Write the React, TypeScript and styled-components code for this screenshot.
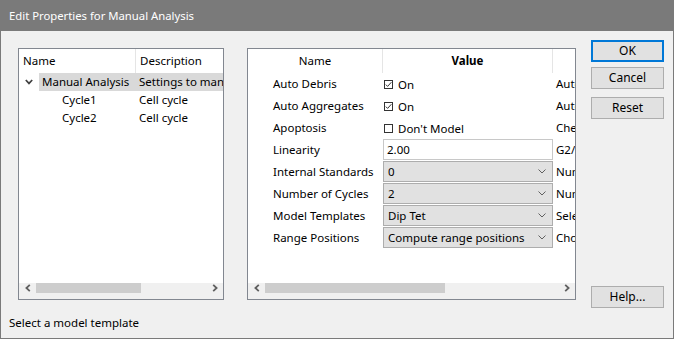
import styled, { createGlobalStyle } from 'styled-components';

const GlobalStyle = createGlobalStyle`
  html, body {
    margin: 0;
    padding: 0;
    background: #f0f0f0;
  }
  * {
    box-sizing: border-box;
  }
`;

type TreeItem = { name: string; desc: string; level: number; expandable?: boolean; selected?: boolean };

const treeItems: TreeItem[] = [
  { name: 'Manual Analysis', desc: 'Settings to manage', level: 0, expandable: true, selected: true },
  { name: 'Cycle1', desc: 'Cell cycle', level: 1 },
  { name: 'Cycle2', desc: 'Cell cycle', level: 1 },
];

type Prop =
  | { name: string; kind: 'check'; checked: boolean; text: string; desc: string }
  | { name: string; kind: 'text'; text: string; desc: string }
  | { name: string; kind: 'combo'; text: string; desc: string };

const props: Prop[] = [
  { name: 'Auto Debris', kind: 'check', checked: true, text: 'On', desc: 'Auto debris' },
  { name: 'Auto Aggregates', kind: 'check', checked: true, text: 'On', desc: 'Auto aggregates' },
  { name: 'Apoptosis', kind: 'check', checked: false, text: "Don't Model", desc: 'Check to model' },
  { name: 'Linearity', kind: 'text', text: '2.00', desc: 'G2/G1 ratio' },
  { name: 'Internal Standards', kind: 'combo', text: '0', desc: 'Number of standards' },
  { name: 'Number of Cycles', kind: 'combo', text: '2', desc: 'Number of cycles' },
  { name: 'Model Templates', kind: 'combo', text: 'Dip Tet', desc: 'Select a template' },
  { name: 'Range Positions', kind: 'combo', text: 'Compute range positions', desc: 'Choose positions' },
];

const Chevron = ({ dir }: { dir: 'left' | 'right' }) => (
  <svg width="6" height="8" viewBox="0 0 6 8">
    <path
      d={dir === 'left' ? 'M4.8 0.8 L1.4 4 L4.8 7.2' : 'M1.2 0.8 L4.6 4 L1.2 7.2'}
      fill="none"
      stroke="#606060"
      strokeWidth="1.8"
    />
  </svg>
);

const ScrollBar = ({ thumbWidth }: { thumbWidth: number }) => (
  <ScrollTrack>
    <ScrollArrow>
      <Chevron dir="left" />
    </ScrollArrow>
    <ThumbArea>
      <Thumb style={{ width: thumbWidth }} />
    </ThumbArea>
    <ScrollArrow>
      <Chevron dir="right" />
    </ScrollArrow>
  </ScrollTrack>
);

const CheckBox = ({ checked }: { checked: boolean }) => (
  <Box>
    {checked && (
      <svg width="7" height="7" viewBox="0 0 7 7">
        <path d="M0.8 3.6 L2.6 5.4 L6.4 1.2" fill="none" stroke="#333" strokeWidth="1" />
      </svg>
    )}
  </Box>
);

const App = (): JSX.Element => {
  return (
    <>
      <GlobalStyle />
      <Window>
        <TitleBar>Edit Properties for Manual Analysis</TitleBar>
        <Body>
          <TreePanel>
            <HeaderRow $cols="117px 1fr">
              <HeaderCell $sep>Name</HeaderCell>
              <HeaderCell>Description</HeaderCell>
            </HeaderRow>
            {treeItems.map((item) => (
              <TreeRow key={item.name}>
                <Expander>
                  {item.expandable && (
                    <svg width="8" height="6" viewBox="0 0 8 6">
                      <path d="M0.8 1 L4 4.4 L7.2 1" fill="none" stroke="#404040" strokeWidth="1.7" />
                    </svg>
                  )}
                </Expander>
                <TreeItemBody $selected={item.selected}>
                  <TreeName $indent={item.level * 20}>{item.name}</TreeName>
                  <TreeDesc>{item.desc}</TreeDesc>
                </TreeItemBody>
              </TreeRow>
            ))}
            <Filler />
            <ScrollBar thumbWidth={105} />
          </TreePanel>

          <GridPanel>
            <HeaderRow $cols="135px 170px 1fr">
              <HeaderCell $sep $center>Name</HeaderCell>
              <HeaderCell $sep $center $bold>Value</HeaderCell>
              <HeaderCell />
            </HeaderRow>
            {props.map((p) => (
              <PropRow key={p.name}>
                <PropName>{p.name}</PropName>
                <PropValue>
                  {p.kind === 'check' && (
                    <CheckValue>
                      <CheckBox checked={p.checked} />
                      <span>{p.text}</span>
                    </CheckValue>
                  )}
                  {p.kind === 'text' && <TextBox>{p.text}</TextBox>}
                  {p.kind === 'combo' && (
                    <ComboBox>
                      <span>{p.text}</span>
                      <svg width="8" height="5" viewBox="0 0 8 5">
                        <path d="M0.5 0.5 L4 4 L7.5 0.5" fill="none" stroke="#606060" strokeWidth="1" />
                      </svg>
                    </ComboBox>
                  )}
                </PropValue>
                <PropDesc>{p.desc}</PropDesc>
              </PropRow>
            ))}
            <Filler />
            <ScrollBar thumbWidth={180} />
          </GridPanel>

          <ButtonColumn>
            <Button $primary>OK</Button>
            <Button>Cancel</Button>
            <Button $gap>Reset</Button>
            <Button $bottom>Help...</Button>
          </ButtonColumn>
        </Body>
        <StatusBar>Select a model template</StatusBar>
      </Window>
    </>
  );
};

export default App;

const Window = styled.div`
  width: 674px;
  height: 339px;
  display: flex;
  flex-direction: column;
  background: #f0f0f0;
  border: 1px solid #7a7a7a;
  border-top: none;
  font-family: 'Noto Sans', 'Liberation Sans', sans-serif;
  font-size: 11.5px;
  color: #000;
`;

const TitleBar = styled.div`
  height: 31px;
  margin: 0 -1px;
  padding: 0 9px;
  background: #7a7a7a;
  color: #fff;
  font-size: 11.3px;
  line-height: 31px;
  flex-shrink: 0;
`;

const Body = styled.div`
  display: flex;
  height: 277px;
  padding: 9px 9px 0 17px;
  flex-shrink: 0;
`;

const Panel = styled.div`
  margin-top: 8px;
  height: 252px;
  border: 1px solid #828790;
  background: #fff;
  display: flex;
  flex-direction: column;
  overflow: hidden;
`;

const TreePanel = styled(Panel)`
  width: 206px;
  margin-right: 23px;
`;

const GridPanel = styled(Panel)`
  width: 329px;
  margin-right: 15px;
`;

const HeaderRow = styled.div<{ $cols: string }>`
  display: grid;
  grid-template-columns: ${(p) => p.$cols};
  height: 24px;
  flex-shrink: 0;
`;

const HeaderCell = styled.div<{ $sep?: boolean; $center?: boolean; $bold?: boolean }>`
  padding-left: ${(p) => (p.$center ? '0' : '4px')};
  line-height: 24px;
  white-space: nowrap;
  overflow: hidden;
  text-align: ${(p) => (p.$center ? 'center' : 'left')};
  font-weight: ${(p) => (p.$bold ? 700 : 400)};
  border-right: ${(p) => (p.$sep ? '1px solid #e5e5e5' : 'none')};
`;

const TreeRow = styled.div`
  display: flex;
  height: 18px;
  flex-shrink: 0;
`;

const Expander = styled.div`
  width: 20px;
  display: flex;
  align-items: center;
  justify-content: center;
  padding-right: 1px;
`;

const TreeItemBody = styled.div<{ $selected?: boolean }>`
  flex: 1;
  display: grid;
  grid-template-columns: 97px 1fr;
  background: ${(p) => (p.$selected ? '#d9d9d9' : 'transparent')};
  line-height: 18px;
  white-space: nowrap;
  overflow: hidden;
`;

const TreeName = styled.div<{ $indent: number }>`
  padding-left: ${(p) => p.$indent + 3}px;
  overflow: hidden;
`;

const TreeDesc = styled.div`
  padding-left: 3px;
  overflow: hidden;
`;

const Filler = styled.div`
  flex: 1;
`;

const ScrollTrack = styled.div`
  height: 16px;
  flex-shrink: 0;
  display: flex;
  align-items: flex-start;
  background: #f0f0f0;
`;

const ScrollArrow = styled.div`
  width: 17px;
  height: 10px;
  display: flex;
  align-items: center;
  justify-content: center;
  flex-shrink: 0;
`;

const ThumbArea = styled.div`
  flex: 1;
  height: 10px;
  display: flex;
`;

const Thumb = styled.div`
  height: 10px;
  background: #cdcdcd;
`;

const PropRow = styled.div`
  display: grid;
  grid-template-columns: 135px 170px 1fr;
  height: 22px;
  flex-shrink: 0;
  white-space: nowrap;
`;

const PropName = styled.div`
  padding-left: 25px;
  line-height: 22px;
  overflow: hidden;
`;

const PropValue = styled.div`
  display: flex;
  align-items: flex-start;
`;

const PropDesc = styled.div`
  padding-left: 3px;
  line-height: 22px;
  overflow: hidden;
`;

const CheckValue = styled.div`
  display: flex;
  align-items: center;
  gap: 5px;
  height: 22px;
  padding-left: 1px;
`;

const Box = styled.div`
  width: 9px;
  height: 9px;
  border: 1px solid #333;
  display: flex;
  align-items: center;
  justify-content: center;
  background: #fff;
`;

const TextBox = styled.div`
  width: 170px;
  height: 21px;
  border: 1px solid #c8c8c8;
  background: #fff;
  padding-left: 3px;
  line-height: 19px;
`;

const ComboBox = styled.div`
  width: 170px;
  height: 21px;
  border: 1px solid #adadad;
  background: #e1e1e1;
  padding: 0 6px 0 4px;
  line-height: 19px;
  display: flex;
  align-items: center;
  justify-content: space-between;
`;

const ButtonColumn = styled.div`
  width: 73px;
  display: flex;
  flex-direction: column;
  flex-shrink: 0;
`;

const Button = styled.div<{ $primary?: boolean; $gap?: boolean; $bottom?: boolean }>`
  height: 22px;
  margin-top: ${(p) => (p.$bottom ? 'auto' : p.$gap ? '8px' : '0')};
  margin-bottom: ${(p) => (p.$primary ? '5px' : '0')};
  border: ${(p) => (p.$primary ? '2px solid #0078d7' : '1px solid #adadad')};
  background: #e1e1e1;
  display: flex;
  align-items: center;
  justify-content: center;
  font-size: 12px;
  line-height: 16px;
`;

const StatusBar = styled.div`
  flex: 1;
  padding: 7px 0 0 8px;
  line-height: 16px;
`;
